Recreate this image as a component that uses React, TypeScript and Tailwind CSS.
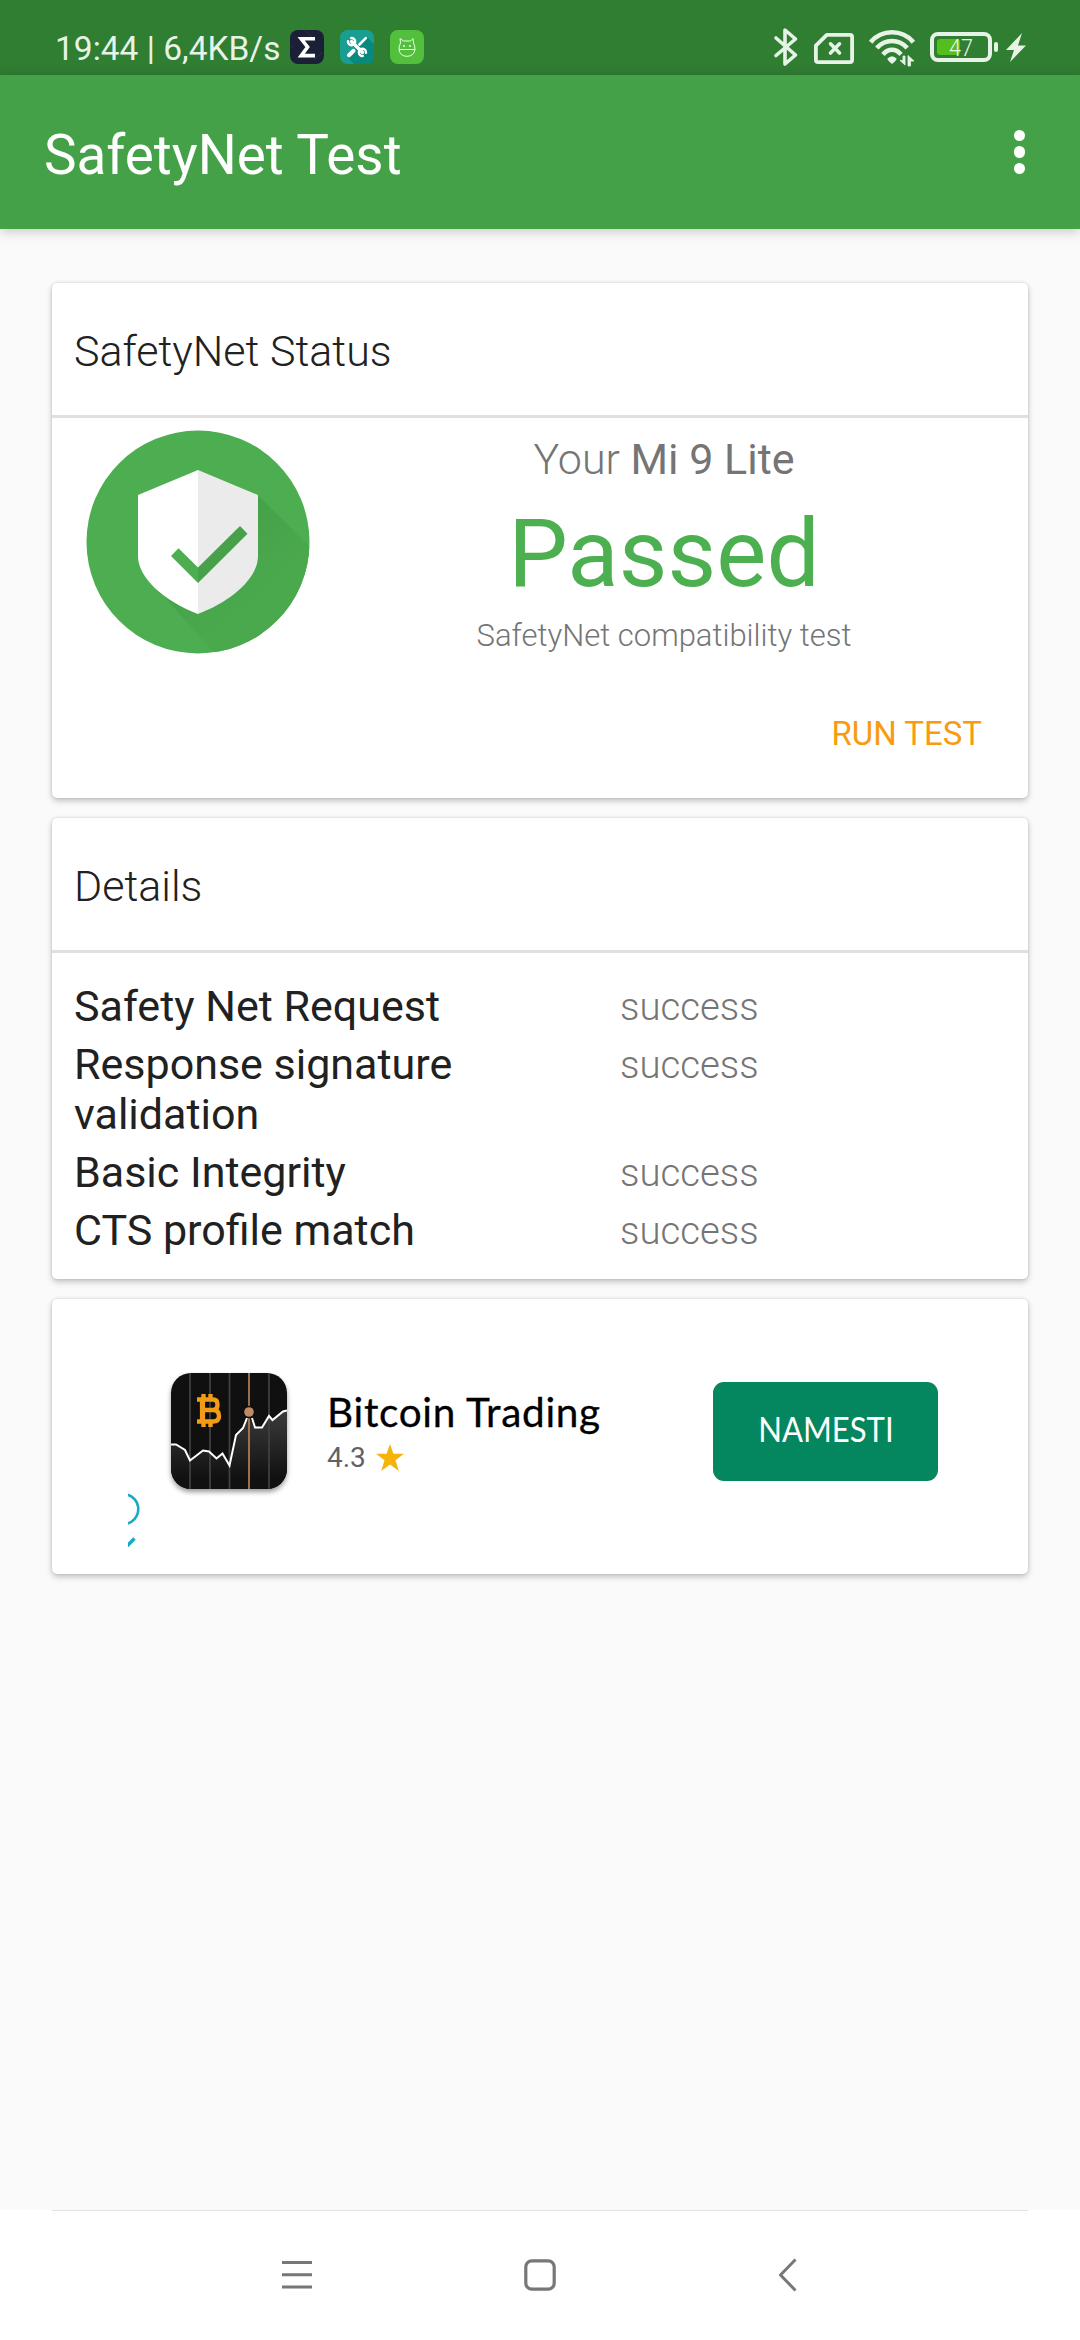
import type { ReactNode } from "react";

interface Check {
  label: string;
  result: string;
}

const checks: Check[] = [
  { label: "Safety Net Request", result: "success" },
  { label: "Response signature validation", result: "success" },
  { label: "Basic Integrity", result: "success" },
  { label: "CTS profile match", result: "success" },
];

function SigmaIcon() {
  return (
    <svg className="h-[34px] w-[34px]" viewBox="0 0 34 34">
      <rect width="34" height="34" rx="8" fill="#1b2036" />
      <path d="M15 1 L23 8 M24 30 L33 22 M1 18 L4 15" stroke="#30364c" strokeWidth="0.8" />
      <path d="M25 8.8H11.2L17.6 17L11.2 25.6H25" fill="none" stroke="#fff" strokeWidth="3.6" />
    </svg>
  );
}

function ToolsIcon() {
  return (
    <svg className="h-[34px] w-[34px]" viewBox="0 0 34 34">
      <rect width="34" height="34" rx="8" fill="#1b9e92" />
      <path d="M7 27 L27 7 L34 14 V26 Q34 34 26 34 H14 Z" fill="#078a7d" />
      <g fill="none" stroke="#fff" strokeLinecap="round">
        <path d="M11.5 11.5 L22.5 22.5" strokeWidth="3.4" />
        <path d="M8 11.2 A3.6 3.6 0 1 0 11.2 8" strokeWidth="2.4" />
        <path d="M26 22.8 A3.6 3.6 0 1 0 22.8 26" strokeWidth="2.4" />
        <path d="M19.5 14.5 L25.8 8.2" strokeWidth="2.6" />
        <path d="M9 25.3 L13.6 20.8" strokeWidth="4" />
      </g>
    </svg>
  );
}

function CatIcon() {
  return (
    <svg className="h-[34px] w-[34px]" viewBox="0 0 34 34">
      <rect width="34" height="34" rx="8" fill="#52c03c" />
      <g fill="none" stroke="#e9ffe2" strokeWidth="1">
        <path d="M10.5 13 L10 8.5 L13.5 11 H20.5 L23 8.5 L23.5 13 Q25 16 25 19.5 H9 Q9 16 10.5 13Z" />
        <path d="M9 19.5 Q10 26.3 17 26.3 Q24 26.3 25 19.5" />
        <path d="M14 15 V17 M20 15 V17" strokeWidth="1.5" />
      </g>
    </svg>
  );
}

function BluetoothIcon() {
  return (
    <svg className="h-[40px] w-[26px]" viewBox="0 0 26 40">
      <path
        d="M3 11 L22.5 28 L12 37 V3 L22.5 12 L3 28.5"
        fill="none"
        stroke="#e8f3e8"
        strokeWidth="3.6"
        strokeLinecap="round"
        strokeLinejoin="round"
      />
    </svg>
  );
}

function NoSimIcon() {
  return (
    <svg className="h-[31px] w-[40px]" viewBox="0 0 40 31" fill="none" stroke="#e8f3e8">
      <path d="M12.8 1.9H36Q38.1 1.9 38.1 4V27Q38.1 29.1 36 29.1H4Q1.9 29.1 1.9 27V12.6Z" strokeWidth="3.8" strokeLinejoin="round" />
      <path d="M16.5 10.8 L25.5 20 M25.5 10.8 L16.5 20" strokeWidth="3.6" strokeLinecap="round" />
    </svg>
  );
}

function WifiIcon() {
  return (
    <svg className="h-[38px] w-[46px]" viewBox="0 0 46 38">
      <g fill="none" stroke="#e8f3e8" strokeWidth="4.6">
        <path d="M1.6 13.2 Q10 3.3 23 3.3 Q36 3.3 44.4 13.2" />
        <path d="M7.8 19 Q14 12 23 12 Q32 12 38.2 19" />
        <path d="M14 25.4 Q18 20.8 23 20.8 Q28 20.8 32 25.4" />
      </g>
      <path d="M18.2 29.8 Q23 24.8 27.8 29.8 Q27 32.2 23 35 Q19 32.2 18.2 29.8Z" fill="#e8f3e8" />
      <path d="M36 27 V36 L31 31.4 H34 V27Z M39 37 V26.5 L45 32 H41.5 V37Z" fill="#e8f3e8" stroke="#e8f3e8" strokeWidth="0.8" />
    </svg>
  );
}

function Battery() {
  return (
    <div className="flex items-center">
      <div className="relative h-[30px] w-[62px] rounded-[8px] border-4 border-[#e8f3e8]">
        <div className="absolute top-[3px] left-[3px] h-4 w-[23px] rounded-[3px] bg-[#54be1c]" />
        <div className="relative scale-x-90 pt-px text-center text-[24px] leading-[23px] font-light text-[#eef7ee]">47</div>
      </div>
      <div className="ml-[2px] h-[10px] w-[4px] rounded-full bg-[#e8f3e8]" />
      <svg className="ml-2 h-[29px] w-5" viewBox="0 0 20 29">
        <path d="M16 0 L0 17 H8 L4 29 L20 12.5 H12Z" fill="#e8f3e8" />
      </svg>
    </div>
  );
}

function StatusBar() {
  return (
    <div className="flex h-[75px] shrink-0 items-start bg-[#2f7e32] text-[#e8f3e8]">
      <span className="mt-[29px] ml-[55px] w-[226px] text-[33.5px] leading-[39px] whitespace-nowrap">19:44 | 6,4KB/s</span>
      <div className="mt-[30px] ml-[9px] flex gap-4">
        <SigmaIcon />
        <ToolsIcon />
        <CatIcon />
      </div>
      <div className="mt-[27px] mr-[54px] ml-auto flex">
        <BluetoothIcon />
        <div className="mt-[6px] ml-[15px]">
          <NoSimIcon />
        </div>
        <div className="mt-[2px] ml-[15px]">
          <WifiIcon />
        </div>
        <div className="mt-[5px] ml-[15px]">
          <Battery />
        </div>
      </div>
    </div>
  );
}

function AppBar() {
  return (
    <header className="z-10 flex h-[154px] shrink-0 items-center justify-between bg-[#45a148] pr-[55px] pl-[44px] text-white shadow-[0_2px_12px_rgba(0,0,0,0.22)]">
      <h1 className="pt-[5px] text-[54.8px] leading-[64px] font-normal">SafetyNet Test</h1>
      <button className="flex flex-col gap-[5px]" aria-label="More options">
        <span className="h-[11.5px] w-[11.5px] rounded-full bg-white" />
        <span className="h-[11.5px] w-[11.5px] rounded-full bg-white" />
        <span className="h-[11.5px] w-[11.5px] rounded-full bg-white" />
      </button>
    </header>
  );
}

function Card({ title, className, children }: { title?: string; className: string; children: ReactNode }) {
  return (
    <section className={`rounded-[5px] bg-white shadow-[0_3px_6px_rgba(0,0,0,0.22),0_0_3px_rgba(0,0,0,0.14)] ${className}`}>
      {title && (
        <h2 className="flex h-[135px] items-center border-b-3 border-[#e0e0e0] pt-[5px] pl-[22px] text-[43px] font-light text-[#212121]">
          {title}
        </h2>
      )}
      {children}
    </section>
  );
}

function ShieldBadge() {
  return (
    <svg className="mt-[12px] ml-[34px] h-[224px] w-[224px]" viewBox="0 0 224 224">
      <defs>
        <clipPath id="disc">
          <circle cx="112" cy="112" r="111.5" />
        </clipPath>
        <linearGradient id="shade" x1="110" y1="90" x2="180" y2="170" gradientUnits="userSpaceOnUse">
          <stop offset="0" stopColor="#459f48" />
          <stop offset="1" stopColor="#4aa94d" />
        </linearGradient>
      </defs>
      <circle cx="112" cy="112" r="111.5" fill="#4cae50" />
      <path d="M172 65 L272 165 V280 H180 L72 160Z" fill="url(#shade)" clipPath="url(#disc)" />
      <path d="M112 40 L52 65 V126 C52 148 78 171 112 184Z" fill="#fff" />
      <path d="M112 40 L172 65 V126 C172 148 146 171 112 184Z" fill="#ebebeb" />
      <path d="M85 126 L92.5 118.3 L112 137.5 V153Z" fill="#4cae50" />
      <path d="M112 137.5 L154 96 L161.5 103.8 L112 153Z" fill="#46a149" />
    </svg>
  );
}

function StatusCard() {
  return (
    <Card title="SafetyNet Status" className="h-[515px]">
      <div className="flex h-[240px]">
        <ShieldBadge />
        <div className="ml-[42px] w-[624px] text-center font-light text-[#757575]">
          <p className="mt-[15px] text-[43px] leading-[52px]">
            Your <span className="font-normal">Mi 9 Lite</span>
          </p>
          <p className="mt-[13px] text-[94.5px] leading-[112px] font-normal text-[#4caf50]">Passed</p>
          <p className="mt-[8px] text-[31px] leading-[36px]">SafetyNet compatibility test</p>
        </div>
      </div>
      <button className="mt-[56px] mr-[46px] ml-auto block text-[33px] leading-[39px] text-[#f99b12]">RUN TEST</button>
    </Card>
  );
}

function DetailsCard() {
  return (
    <Card title="Details" className="mt-[20px] h-[461px]">
      <dl className="flex flex-col gap-[8px] pt-[28px] pl-[22px]">
        {checks.map((c) => (
          <div key={c.label} className="flex items-start">
            <dt className="w-[546px] pr-[120px] text-[43px] leading-[50px] text-[#212121]">{c.label}</dt>
            <dd className="pt-[2px] text-[38.3px] leading-[48px] font-light text-[#757575]">{c.result}</dd>
          </div>
        ))}
      </dl>
    </Card>
  );
}

function BitcoinAppIcon() {
  return (
    <svg className="h-[116px] w-[116px] rounded-[20px] shadow-[0_3px_5px_rgba(0,0,0,0.4)]" viewBox="0 0 116 116">
      <defs>
        <linearGradient id="area" x1="0" y1="40" x2="0" y2="105" gradientUnits="userSpaceOnUse">
          <stop offset="0" stopColor="#3a3a3a" />
          <stop offset="1" stopColor="#111" />
        </linearGradient>
      </defs>
      <rect width="116" height="116" fill="#101010" />
      <path
        d="M0 71.5 H5 L14 77 L19 87.5 L32 77.5 L38 78.5 L45.5 85.5 L51.5 80.5 L58.5 92.5 L65 62 L72 55 L77 42 L83 54.5 H91 L98 43 L101.5 47 L112 38.5 L116 37.5 V116 H0Z"
        fill="url(#area)"
      />
      <path d="M19 0V116 M39 0V116 M58.5 0V116 M98 0V116" stroke="#404040" strokeWidth="1.8" />
      <path d="M78 0V116" stroke="#a97b58" strokeWidth="1.8" />
      <path
        d="M0 71.5 H5 L14 77 L19 87.5 L32 77.5 L38 78.5 L45.5 85.5 L51.5 80.5 L58.5 92.5 L65 62 L72 55 L76 45 M81 45 L84 54.5 H91 L98 43 L101.5 47 L112 38.5 L116 37.5"
        fill="none"
        stroke="#fff"
        strokeWidth="2"
      />
      <circle cx="78" cy="39" r="6.3" fill="#111" />
      <circle cx="78" cy="39" r="4.8" fill="#bd8b66" />
      {/* bitcoin mark */}
      <g fill="none" stroke="#f39c17">
        <path d="M26 26.5 H42 Q46.5 26.5 46.5 31.5 Q46.5 37 42 37 H31 M42 37 Q48 37 48 43 Q48 48.5 42 48.5 H26" strokeWidth="4.4" />
        <path d="M31.5 25 V50" strokeWidth="5.2" />
        <path d="M32.5 21 V26 M39.5 21 V26 M32.5 49 V54 M39.5 49 V54" strokeWidth="4.4" />
      </g>
    </svg>
  );
}

function AdCard() {
  return (
    <Card className="relative mt-[20px] flex h-[275px] items-start">
      <div className="mt-[74px] ml-[119px]">
        <BitcoinAppIcon />
      </div>
      <div className="mt-[88px] ml-[40px] w-[386px]">
        <p className="font-['Lato','Roboto',sans-serif] text-[40.5px] leading-[50px] tracking-[0.7px] whitespace-nowrap text-black [-webkit-text-stroke:0.3px_black]">
          Bitcoin Trading
        </p>
        <p className="mt-[4px] flex items-center text-[28px] leading-[34px] text-[#5f6368]">
          <span className="w-[49px]">4.3</span>
          <svg className="h-[28px] w-[28px]" viewBox="0 0 28 28">
            <path d="M14 0 L17.4 9.8 H28 L19.5 16.2 L22.8 27 L14 20.6 L5.2 27 L8.5 16.2 L0 9.8 H10.6Z" fill="#f5b30c" />
          </svg>
        </p>
      </div>
      <button className="mt-[83px] h-[99px] w-[225px] rounded-[11px] bg-[#04875f] pb-[4px] font-['Lato','Roboto',sans-serif] text-[35.3px] text-white">
        <span className="inline-block scale-x-[0.88]">NAMESTI</span>
      </button>
      {/* progress mark cut off at the banner edge */}
      <svg className="absolute top-[190px] left-[76px] h-[60px] w-[16px] overflow-hidden" viewBox="0 0 16 60" fill="none" stroke="#18a9c4">
        <path d="M-3 5.2 A15 15 0 0 1 -3 35" strokeWidth="2.6" />
        <path d="M-1 57 L6.5 49.5" strokeWidth="3.4" />
      </svg>
    </Card>
  );
}

function NavBar() {
  return (
    <nav className="relative mt-auto flex h-[130px] shrink-0 items-start bg-white pt-[48px] text-[#777]">
      <div className="absolute top-0 left-[52px] h-px w-[976px] bg-[#e2e2e2]" />
      <svg className="ml-[280px] h-[34px] w-[34px]" viewBox="0 0 34 34" fill="none" stroke="currentColor" strokeWidth="3">
        <path d="M2 4.5H32 M2 16.8H32 M2 29H32" />
      </svg>
      <svg className="ml-[209px] h-[34px] w-[34px]" viewBox="0 0 34 34" fill="none" stroke="currentColor" strokeWidth="3.2">
        <rect x="2.8" y="2.8" width="28.4" height="28.4" rx="6" />
      </svg>
      <svg className="ml-[220px] h-[34px] w-[21px]" viewBox="0 0 21 34" fill="none" stroke="currentColor" strokeWidth="3" strokeLinejoin="round">
        <path d="M18.5 1.5 L3.5 17 L18.5 32.5" />
      </svg>
    </nav>
  );
}

export default function App() {
  return (
    <div className="flex h-[2340px] w-[1080px] flex-col overflow-hidden bg-[#fafafa] font-['Roboto',sans-serif]">
      <StatusBar />
      <AppBar />
      <main className="px-[52px] pt-[54px]">
        <StatusCard />
        <DetailsCard />
        <AdCard />
      </main>
      <NavBar />
    </div>
  );
}
